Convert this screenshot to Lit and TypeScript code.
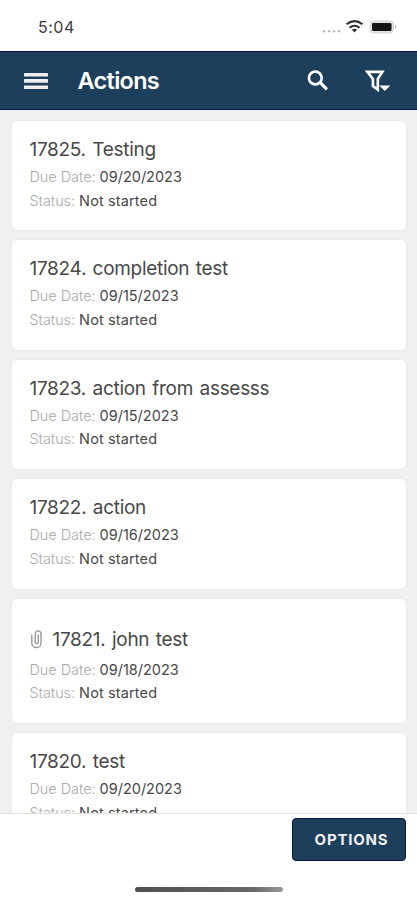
import { LitElement, html, css, svg, nothing } from "lit";
import { customElement, property } from "lit/decorators.js";

interface Action {
  title: string;
  due: string;
  attachment?: boolean;
}

const ACTIONS: Action[] = [
  { title: "17825. Testing", due: "09/20/2023" },
  { title: "17824. completion test", due: "09/15/2023" },
  { title: "17823. action from assesss", due: "09/15/2023" },
  { title: "17822. action", due: "09/16/2023" },
  { title: "17821. john test", due: "09/18/2023", attachment: true },
  { title: "17820. test", due: "09/20/2023" },
];

@customElement("status-bar")
class StatusBar extends LitElement {
  static styles = css`
    :host { display: flex; box-sizing: border-box; height: 51px; padding: 16px 18px 0 38px; align-items: flex-start; justify-content: space-between; background: #fff; }
    .time { font-size: 16px; line-height: 22px; letter-spacing: 0.5px; color: #3c3c3c; }
    svg { display: block; }
  `;
  render() {
    return html`<span class="time">5:04</span>
      <svg width="78" height="22" viewBox="0 0 78 22">
        ${[3, 8, 13, 18].map((x) => svg`<circle cx=${x} cy="15.3" r="1.2" fill="#b4b4b4" />`)}
        <g fill="none" stroke="#2d2d2d" stroke-width="2">
          <path d="M25.6 8.3 Q33.5 1.9 41.4 8.3" />
          <path d="M28.5 11.8 Q33.5 7.6 38.5 11.8" />
        </g>
        <path d="M30.9 13.6 Q33.5 11.7 36.1 13.6 L33.5 16.4Z" fill="#2d2d2d" />
        <rect x="49" y="5" width="23.5" height="12" rx="3.4" fill="#e4e4e4" stroke="#d4d4d4" />
        <rect x="51" y="7" width="19.5" height="8" rx="1.3" fill="#151515" />
        <path d="M74 8.8 Q76.6 10.7 74 12.8Z" fill="#aaa" />
      </svg>`;
  }
}

@customElement("app-header")
class AppHeader extends LitElement {
  static styles = css`
    :host { display: flex; box-sizing: border-box; height: 59px; padding: 0 25px 0 24px; align-items: center; background: #1d3f5b; border-top: 1px solid #0c1645; border-bottom: 1px solid #0c1645; color: #fff; }
    h1 { flex: 1; margin: 0 0 0 29.5px; font-size: 23.5px; line-height: 30px; font-weight: 600; letter-spacing: -0.7px; }
    svg { display: block; }
    .filter { margin-left: 34px; }
  `;
  render() {
    return html`
      <svg width="24" height="20" viewBox="0 0 24 20" fill="#f1efed">
        <rect y="1.9" width="24" height="3.6" rx=".5" /><rect y="8.1" width="24" height="3.6" rx=".5" /><rect y="14.4" width="24" height="3.6" rx=".5" />
      </svg>
      <h1>Actions</h1>
      <svg width="24" height="24" viewBox="0 0 24 24" fill="none" stroke="#fff">
        <circle cx="9.3" cy="9" r="6.4" stroke-width="2.6" /><path d="M13.8 13.2 20.9 20.3" stroke-width="3.2" />
      </svg>
      <svg class="filter" width="28" height="24" viewBox="0 0 28 24">
        <path d="M3.4 2.9H18.4L13.8 9.9V20.6L8.9 17V9.9Z" fill="none" stroke="#fff" stroke-width="2.6" />
        <path d="M15.2 16.6H26.4L20.8 21.9Z" fill="#fff" />
      </svg>`;
  }
}

@customElement("action-card")
class ActionCard extends LitElement {
  @property({ attribute: false }) action!: Action;
  static styles = css`
    :host { display: block; }
    .card { box-sizing: border-box; height: 109.4px; padding: 17px 18px 0 17.5px; background: #fff; border-radius: 5px; box-shadow: 0 0 2px rgba(0, 0, 0, 0.08); }
    .attached { height: 124.4px; padding-top: 28px; }
    .title { display: flex; align-items: center; height: 24px; font-size: 19px; line-height: 24px; letter-spacing: -0.3px; word-spacing: 1.5px; color: #484848; white-space: pre; }
    .attached .title { height: 26px; }
    svg { display: block; margin: -1px 9px 0 0; }
    .line { height: 23.6px; margin: 0; font-size: 14.5px; line-height: 23.6px; white-space: pre; color: #484848; }
    .first { margin-top: 3px; }
    .attached .first { margin-top: 5px; }
    .label { color: #aaa; font-weight: 300; letter-spacing: -0.06px; }
    .status { letter-spacing: 0.13px; }
  `;
  render() {
    const a = this.action;
    return html`<article class="card ${a.attachment ? "attached" : ""}">
      <div class="title">${a.attachment
        ? html`<svg width="14" height="20" viewBox="0 0 14 20" fill="none" stroke="#999" stroke-width="1.4"><path d="M8.3 5.5V13A1.5 1.5 0 0 1 5.2 13V4.8A2.9 2.9 0 0 1 11 4.8V13.9A4.6 4.6 0 0 1 1.8 13.9V5.5" /></svg>`
        : nothing}<span>${a.title}</span></div>
      <p class="line first"><span class="label">Due Date: </span><span class="due">${a.due}</span></p>
      <p class="line"><span class="label">Status: </span><span class="status">Not started</span></p>
    </article>`;
  }
}

@customElement("app-root")
class AppRoot extends LitElement {
  static styles = css`
    :host { display: flex; flex-direction: column; height: 900px; overflow: hidden; background: #fff; font-family: Inter, "Liberation Sans", sans-serif; }
    main { display: flex; flex-direction: column; gap: 10px; flex: 1; min-height: 0; box-sizing: border-box; padding: 11px 11px 0 12px; overflow: hidden; background: #f0f0f0; }
    action-card { flex: none; }
    footer { display: flex; flex-direction: column; box-sizing: border-box; height: 87px; padding: 4px 11px 0 0; border-top: 1px solid #e2e2e2; }
    button { align-self: flex-end; box-sizing: border-box; width: 114px; height: 43px; padding: 0 0 0 5px; border: 1px solid #0c1645; border-radius: 4px; background: #1d3f5b; color: #eee; font: 700 15px/20px Inter, "Liberation Sans", sans-serif; letter-spacing: 0.8px; }
    .home { width: 148px; height: 5px; margin: 26px 0 0 135px; border-radius: 3px; background: linear-gradient(90deg, #505050, #686868 80%, #999); }
  `;
  render() {
    return html`<status-bar></status-bar><app-header></app-header>
      <main>${ACTIONS.map((a) => html`<action-card .action=${a}></action-card>`)}</main>
      <footer><button>OPTIONS</button><div class="home"></div></footer>`;
  }
}
